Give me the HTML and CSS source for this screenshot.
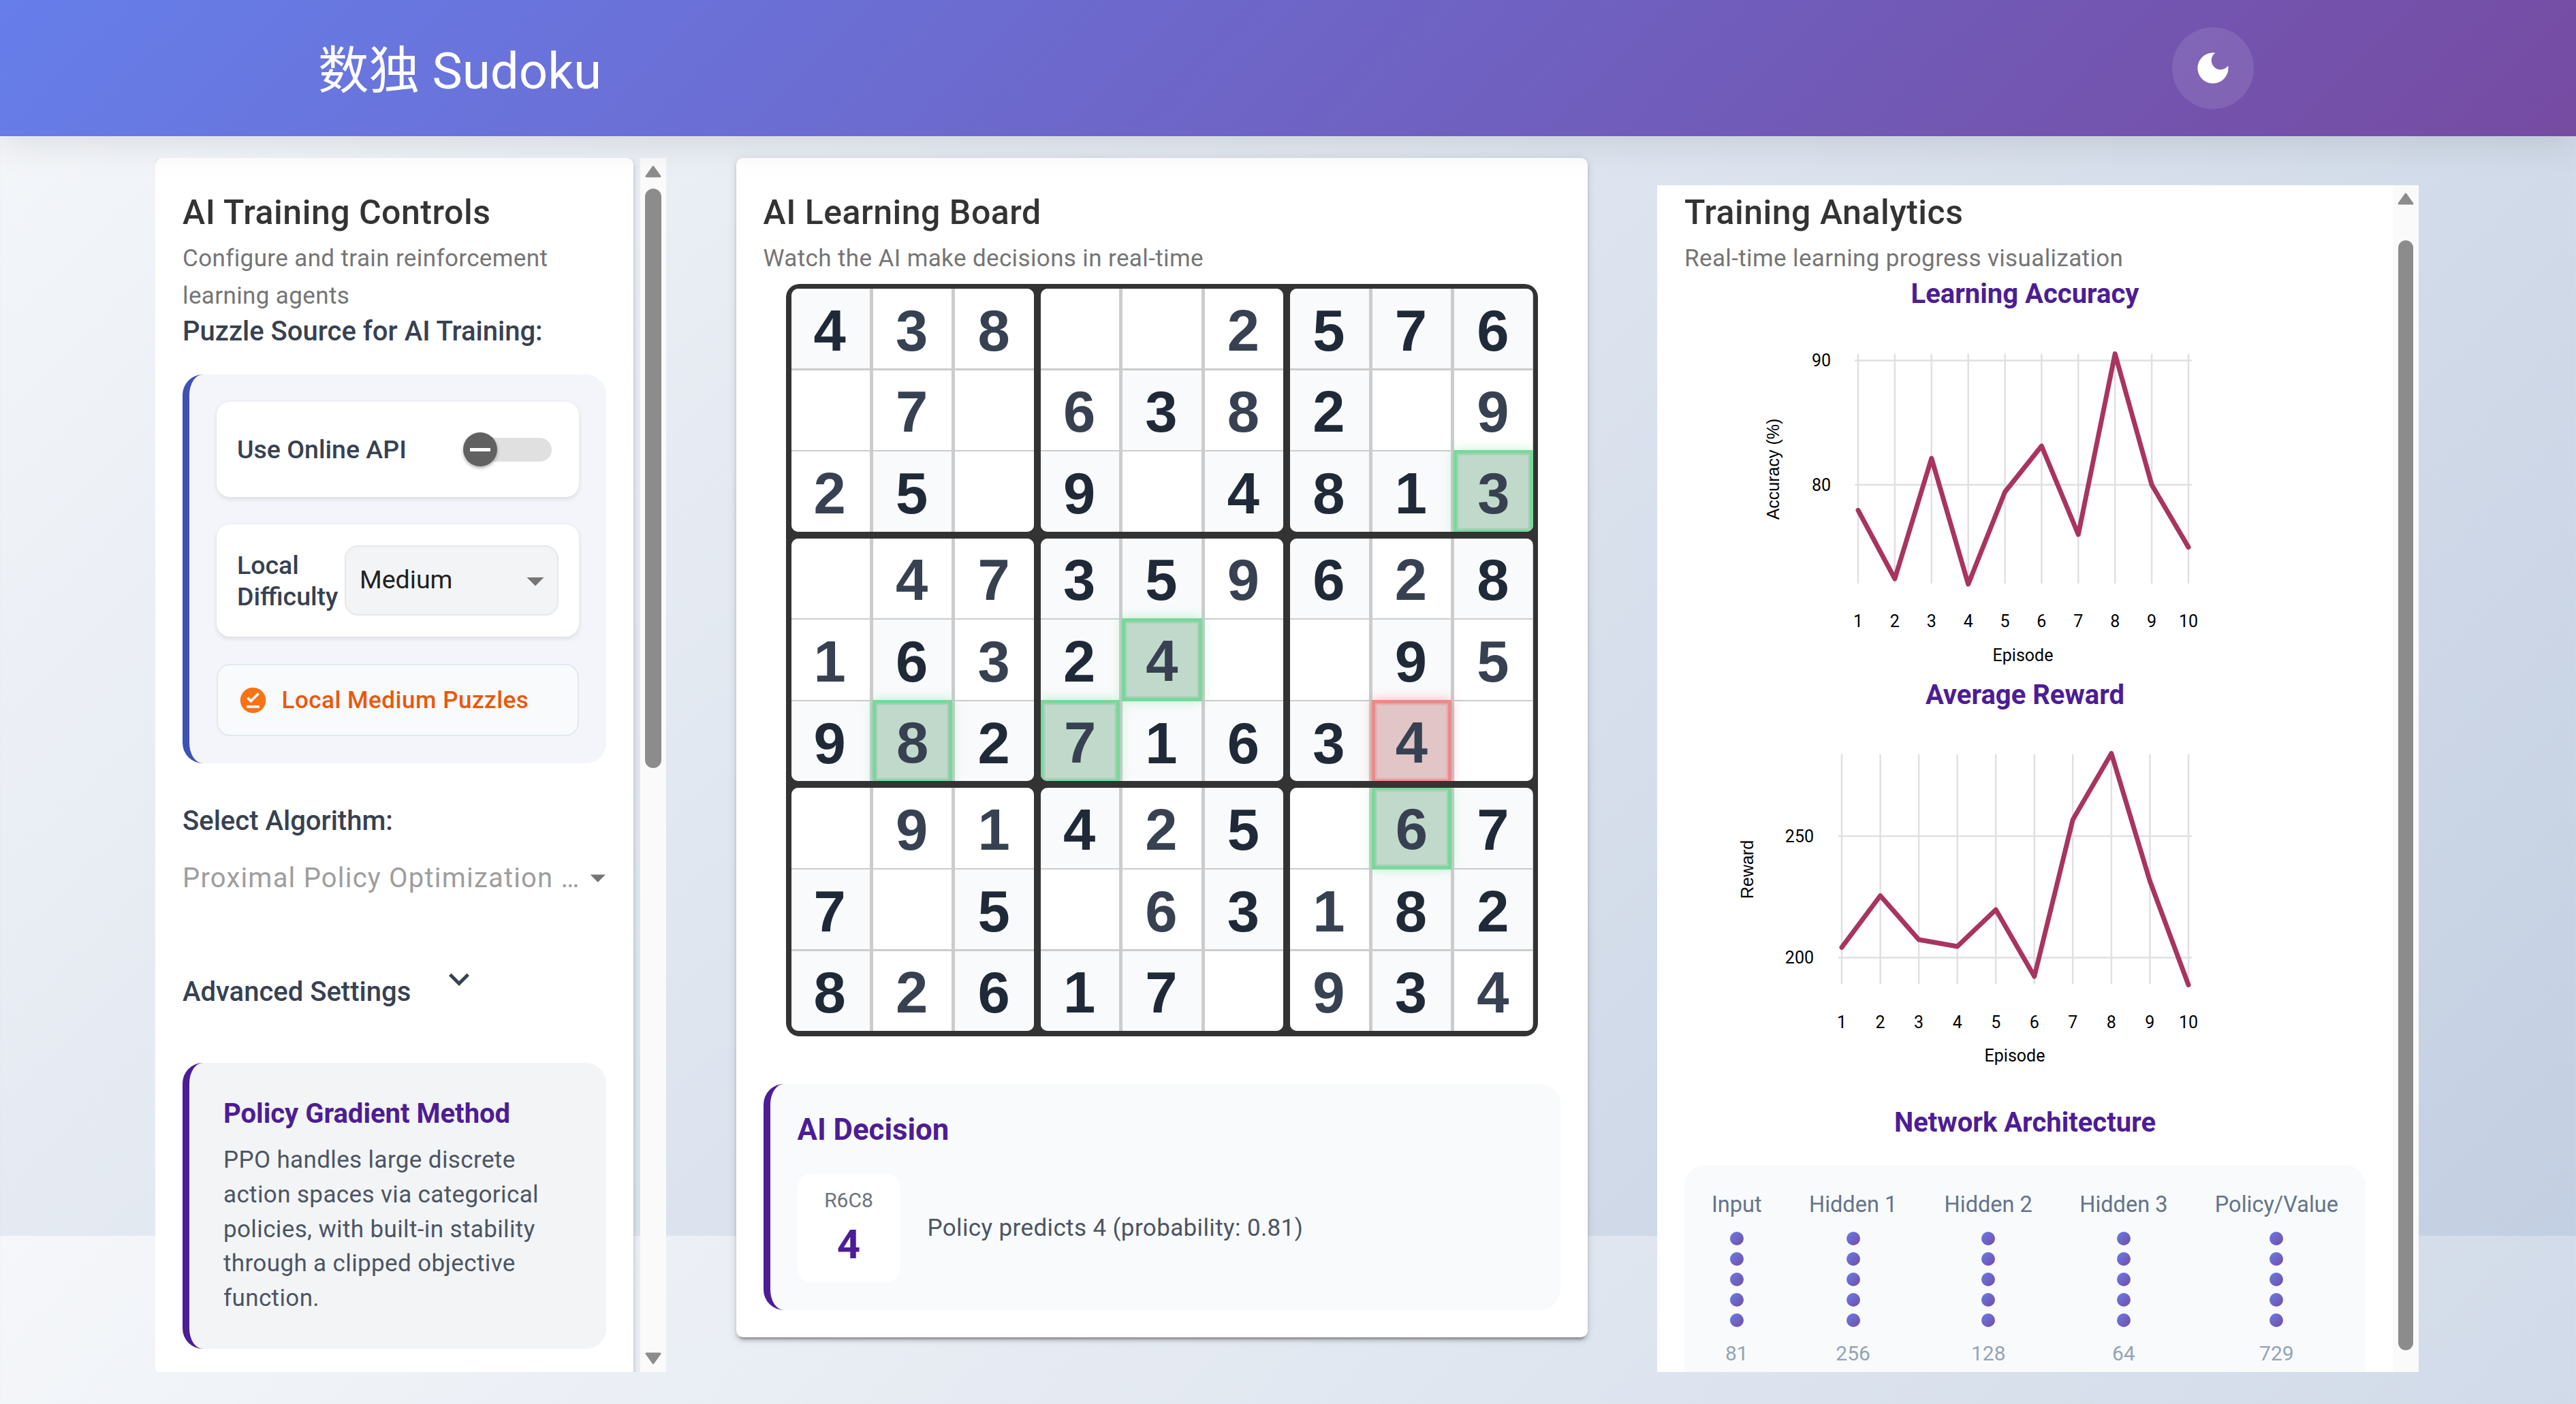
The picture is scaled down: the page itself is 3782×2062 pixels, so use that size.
FILE: index.html
```html
<!DOCTYPE html>
<html>
<head>
	<title>数独 Sudoku</title>
	<link rel="stylesheet" href="styles.css">
</head>
<body>
	<header class="topbar">
		<div class="brand">数独 Sudoku</div>
		<button class="theme-btn">
			<svg viewBox="0 0 24 24" width="60" height="60"><path fill="#fff" d="M12 3c-4.97 0-9 4.03-9 9s4.03 9 9 9 9-4.03 9-9c0-.46-.04-.92-.1-1.36-.98 1.37-2.58 2.26-4.4 2.26-2.98 0-5.4-2.42-5.4-5.4 0-1.81.89-3.42 2.26-4.4-.44-.06-.9-.1-1.36-.1z"/></svg>
		</button>
	</header>

	<main class="layout">
		<!-- left column -->
		<section class="col-left">
			<div class="paper paper-left">
				<h2 class="panel-title">AI Training Controls</h2>
				<p class="panel-sub">Configure and train reinforcement learning agents</p>
				<div class="field-label">Puzzle Source for AI Training:</div>

				<div class="source-card">
					<div class="source-row switch-row">
						<span class="row-label">Use Online API</span>
						<span class="switch"><span class="switch-thumb"><span class="switch-minus"></span></span></span>
					</div>
					<div class="source-row diff-row">
						<span class="row-label diff-label">Local Difficulty</span>
						<div class="diff-select">
							<span>Medium</span>
							<svg viewBox="0 0 24 24" width="60" height="60"><path fill="#757575" d="M7 10l5 5 5-5z"/></svg>
						</div>
					</div>
					<div class="status-row">
						<svg viewBox="0 0 24 24" width="45" height="45"><path fill="#f97316" d="M12 2C6.5 2 2 6.5 2 12s4.5 10 10 10 10-4.5 10-10S17.5 2 12 2zm5 16H7v-2h10v2zm-6.7-4L7 10.7l1.4-1.4 1.9 1.9 5.3-5.3L17 7.3 10.3 14z"/></svg>
						<span>Local Medium Puzzles</span>
					</div>
				</div>

				<div class="field-label algo-label">Select Algorithm:</div>
				<div class="algo-select">
					<span>Proximal Policy Optimization …</span>
					<svg viewBox="0 0 24 24" width="60" height="60"><path fill="#757575" d="M7 10l5 5 5-5z"/></svg>
				</div>

				<div class="advanced">
					<span>Advanced Settings</span>
					<svg viewBox="0 0 24 24" width="60" height="60"><path fill="#374151" d="M16.59 8.59 12 13.17 7.41 8.59 6 10l6 6 6-6z"/></svg>
				</div>

				<div class="info-card">
					<h4>Policy Gradient Method</h4>
					<p>PPO handles large discrete action spaces via categorical policies, with built-in stability through a clipped objective function.</p>
				</div>
			</div>
			<div class="scroll-track">
				<svg class="arrow" viewBox="0 0 24 18" width="24" height="18"><path fill="#8c8c8c" stroke="#8c8c8c" stroke-width="3" stroke-linejoin="round" d="M12 2 22 16H2z"/></svg>
				<div class="scroll-thumb thumb-left"></div>
				<svg class="arrow arrow-down" viewBox="0 0 24 18" width="24" height="18"><path fill="#8c8c8c" stroke="#8c8c8c" stroke-width="3" stroke-linejoin="round" d="M12 16 22 2H2z"/></svg>
			</div>
		</section>

		<!-- board -->
		<section class="paper paper-mid">
			<h2 class="panel-title">AI Learning Board</h2>
			<p class="panel-sub">Watch the AI make decisions in real-time</p>

			<div class="board">
				<div class="block">
					<div class="cell given">4</div><div class="cell">3</div><div class="cell">8</div>
					<div class="cell"></div><div class="cell">7</div><div class="cell"></div>
					<div class="cell">2</div><div class="cell given">5</div><div class="cell"></div>
				</div>
				<div class="block">
					<div class="cell"></div><div class="cell"></div><div class="cell">2</div>
					<div class="cell">6</div><div class="cell given">3</div><div class="cell">8</div>
					<div class="cell given">9</div><div class="cell"></div><div class="cell given">4</div>
				</div>
				<div class="block">
					<div class="cell given">5</div><div class="cell given">7</div><div class="cell given">6</div>
					<div class="cell given">2</div><div class="cell"></div><div class="cell">9</div>
					<div class="cell given">8</div><div class="cell given">1</div><div class="cell good">3</div>
				</div>
				<div class="block">
					<div class="cell"></div><div class="cell">4</div><div class="cell">7</div>
					<div class="cell">1</div><div class="cell given">6</div><div class="cell">3</div>
					<div class="cell given">9</div><div class="cell good">8</div><div class="cell given">2</div>
				</div>
				<div class="block">
					<div class="cell given">3</div><div class="cell given">5</div><div class="cell">9</div>
					<div class="cell given">2</div><div class="cell good">4</div><div class="cell"></div>
					<div class="cell good">7</div><div class="cell given">1</div><div class="cell given">6</div>
				</div>
				<div class="block">
					<div class="cell given">6</div><div class="cell">2</div><div class="cell given">8</div>
					<div class="cell"></div><div class="cell given">9</div><div class="cell">5</div>
					<div class="cell given">3</div><div class="cell bad">4</div><div class="cell"></div>
				</div>
				<div class="block">
					<div class="cell"></div><div class="cell">9</div><div class="cell">1</div>
					<div class="cell given">7</div><div class="cell"></div><div class="cell given">5</div>
					<div class="cell given">8</div><div class="cell">2</div><div class="cell given">6</div>
				</div>
				<div class="block">
					<div class="cell given">4</div><div class="cell">2</div><div class="cell given">5</div>
					<div class="cell"></div><div class="cell">6</div><div class="cell given">3</div>
					<div class="cell given">1</div><div class="cell given">7</div><div class="cell"></div>
				</div>
				<div class="block">
					<div class="cell"></div><div class="cell good">6</div><div class="cell given">7</div>
					<div class="cell">1</div><div class="cell given">8</div><div class="cell given">2</div>
					<div class="cell">9</div><div class="cell given">3</div><div class="cell">4</div>
				</div>
			</div>

			<div class="decision">
				<h4>AI Decision</h4>
				<div class="decision-body">
					<div class="decision-cell">
						<div class="decision-pos">R6C8</div>
						<div class="decision-num">4</div>
					</div>
					<p>Policy predicts 4 (probability: 0.81)</p>
				</div>
			</div>
		</section>

		<!-- analytics -->
		<section class="col-right">
			<div class="analytics">
				<h2 class="panel-title">Training Analytics</h2>
				<p class="panel-sub">Real-time learning progress visualization</p>

				<h4 class="chart-title first-title">Learning Accuracy</h4>
				<svg class="chart chart-acc" viewBox="0 0 1000 543" width="1000" height="543">
					<g class="grid">
						<path d="M255 66.6V404M308.9 66.6V404M362.8 66.6V404M416.7 66.6V404M470.6 66.6V404M524.4 66.6V404M578.3 66.6V404M632.2 66.6V404M686.1 66.6V404M740 66.6V404"/>
						<path d="M250 76.5H745M250 259H745"/>
					</g>
					<polyline class="series" points="255,296.4 308.9,397 362.8,220 416.7,405 470.6,269.5 524.4,202 578.3,332 632.2,66.6 686.1,259 740,350.6"/>
					<g class="ticks">
						<text x="215" y="85" text-anchor="end">90</text>
						<text x="215" y="268" text-anchor="end">80</text>
						<text x="255" y="468">1</text><text x="308.9" y="468">2</text><text x="362.8" y="468">3</text><text x="416.7" y="468">4</text><text x="470.6" y="468">5</text><text x="524.4" y="468">6</text><text x="578.3" y="468">7</text><text x="632.2" y="468">8</text><text x="686.1" y="468">9</text><text x="740" y="468">10</text>
						<text x="497" y="518">Episode</text>
					</g>
					<text class="axis-y" transform="translate(139 236) rotate(-90)">Accuracy (%)</text>
				</svg>

				<h4 class="chart-title">Average Reward</h4>
				<svg class="chart chart-rew" viewBox="0 0 1000 582" width="1000" height="582">
					<g class="grid">
						<path d="M231 65.8V403M287.6 65.8V403M344.1 65.8V403M400.7 65.8V403M457.2 65.8V403M513.8 65.8V403M570.3 65.8V403M626.9 65.8V403M683.4 65.8V403M740 65.8V403"/>
						<path d="M226 186H745M226 364.5H745"/>
					</g>
					<polyline class="series" points="231,349.4 287.6,273.5 344.1,338 400.7,348 457.2,294 513.8,392 570.3,161.7 626.9,64.5 683.4,252 740,404.5"/>
					<g class="ticks">
						<text x="190" y="194.5" text-anchor="end">250</text>
						<text x="190" y="373" text-anchor="end">200</text>
						<text x="231" y="468">1</text><text x="287.6" y="468">2</text><text x="344.1" y="468">3</text><text x="400.7" y="468">4</text><text x="457.2" y="468">5</text><text x="513.8" y="468">6</text><text x="570.3" y="468">7</text><text x="626.9" y="468">8</text><text x="683.4" y="468">9</text><text x="740" y="468">10</text>
						<text x="485" y="517">Episode</text>
					</g>
					<text class="axis-y" transform="translate(101 235) rotate(-90)">Reward</text>
				</svg>

				<h4 class="chart-title net-title">Network Architecture</h4>
				<div class="net">
					<div class="net-col">
						<span class="net-name">Input</span>
						<span class="dot"></span><span class="dot"></span><span class="dot"></span><span class="dot"></span><span class="dot"></span>
						<span class="net-size">81</span>
					</div>
					<div class="net-col">
						<span class="net-name">Hidden 1</span>
						<span class="dot"></span><span class="dot"></span><span class="dot"></span><span class="dot"></span><span class="dot"></span>
						<span class="net-size">256</span>
					</div>
					<div class="net-col">
						<span class="net-name">Hidden 2</span>
						<span class="dot"></span><span class="dot"></span><span class="dot"></span><span class="dot"></span><span class="dot"></span>
						<span class="net-size">128</span>
					</div>
					<div class="net-col">
						<span class="net-name">Hidden 3</span>
						<span class="dot"></span><span class="dot"></span><span class="dot"></span><span class="dot"></span><span class="dot"></span>
						<span class="net-size">64</span>
					</div>
					<div class="net-col">
						<span class="net-name">Policy/Value</span>
						<span class="dot"></span><span class="dot"></span><span class="dot"></span><span class="dot"></span><span class="dot"></span>
						<span class="net-size">729</span>
					</div>
				</div>
			</div>
			<div class="scroll-track track-right">
				<svg class="arrow" viewBox="0 0 24 18" width="24" height="18"><path fill="#8c8c8c" stroke="#8c8c8c" stroke-width="3" stroke-linejoin="round" d="M12 2 22 16H2z"/></svg>
				<div class="scroll-thumb thumb-right"></div>
			</div>
		</section>
	</main>
</body>
</html>
```
FILE: styles.css
```css
html {
	height: 100%;
	overflow: hidden;
	background: linear-gradient(135deg, #f5f7fa 0%, #c3cfe2 100%) 0 0 / 100% 1815px;
}
body {
	margin: 0;
	height: 100%;
	font-family: Roboto, "Noto Sans CJK SC", sans-serif;
	color: #333;
}
h2, h4, p {
	margin: 0;
}

/* header */
.topbar {
	height: 200px;
	display: flex;
	align-items: center;
	justify-content: space-between;
	padding: 0 473px 0 467px;
	background: linear-gradient(135deg, #667eea 0%, #764ba2 100%);
	box-shadow: 0 10px 50px rgba(0, 0, 0, .1);
	position: relative;
}
.brand {
	color: #fff;
	font-size: 74.5px;
	line-height: 88px;
	margin-top: 10px;
}
.theme-btn {
	width: 120px;
	height: 120px;
	padding: 0;
	border: none;
	border-radius: 50%;
	background: rgba(255, 255, 255, .1);
	display: flex;
	align-items: center;
	justify-content: center;
}

/* columns */
.layout {
	display: flex;
	justify-content: center;
	gap: 102.5px;
	padding: 32px 3px 0 0;
}
.col-left {
	width: 750px;
	height: 1783px;
	flex: none;
	display: flex;
	overflow: hidden;
}
.col-right {
	width: 1118px;
	height: 1743px;
	margin-top: 40px;
	flex: none;
	display: flex;
	overflow: hidden;
	background: #fff;
}
.paper {
	background: #fff;
	border-radius: 10px;
	box-shadow: 0 7.5px 2.5px -5px rgba(0, 0, 0, .2), 0 5px 5px 0 rgba(0, 0, 0, .14), 0 2.5px 12.5px 0 rgba(0, 0, 0, .12);
}
.paper-left {
	width: 702px;
	margin-right: 10px;
	flex: none;
	padding: 40px;
	box-sizing: border-box;
	align-self: flex-start;
}
.paper-mid {
	width: 1250px;
	flex: none;
	padding: 40px;
	box-sizing: border-box;
	align-self: flex-start;
}
.analytics {
	width: 1080px;
	padding: 0 40px;
	box-sizing: border-box;
	flex: none;
}

/* fake scrollbar, it's only a picture of one */
.scroll-track {
	width: 38px;
	flex: none;
	background: #fafafa;
	display: flex;
	flex-direction: column;
	align-items: center;
	padding-top: 11px;
	box-sizing: border-box;
}
.arrow {
	flex: none;
	display: block;
}
.scroll-thumb {
	width: 24px;
	border-radius: 12px;
	background: #8c8c8c;
	flex: none;
}
.thumb-left {
	height: 851px;
	margin-top: 16px;
}
.thumb-right {
	width: 22px;
	height: 1630px;
	margin-top: 52px;
	border-radius: 11px;
}
.arrow-down {
	margin-top: 858px;
}

/* shared panel text */
.panel-title {
	font-size: 50px;
	line-height: 80px;
	font-weight: 500;
	letter-spacing: .5px;
	color: #333;
}
.panel-sub {
	font-size: 35px;
	line-height: 55px;
	letter-spacing: .375px;
	color: #757575;
}
.field-label {
	margin-top: 2px;
	font-size: 40px;
	line-height: 46px;
	font-weight: 500;
	color: #374151;
}

/* source card */
.source-card {
	margin-top: 40px;
	padding: 40px;
	height: 571px;
	box-sizing: border-box;
	background: #f3f5fa;
	border-left: 10px solid #3f51b5;
	border-radius: 30px;
	display: flex;
	flex-direction: column;
	gap: 40px;
}
.source-row {
	background: #fff;
	border-radius: 20px;
	box-shadow: 0 2.5px 7.5px rgba(0, 0, 0, .1);
	display: flex;
	align-items: center;
	padding-left: 30px;
}
.row-label {
	font-size: 37.5px;
	line-height: 46px;
	font-weight: 500;
	color: #374151;
}
.switch-row {
	height: 140px;
	justify-content: space-between;
	padding-right: 40px;
}
.switch {
	width: 108px;
	height: 35px;
	border-radius: 18px;
	background: #e0e0e0;
	position: relative;
}
.switch-thumb {
	position: absolute;
	left: -22px;
	top: -7.5px;
	width: 50px;
	height: 50px;
	border-radius: 50%;
	background: #616161;
	box-shadow: 0 2.5px 5px rgba(0, 0, 0, .3);
	display: flex;
	align-items: center;
	justify-content: center;
}
.switch-minus {
	width: 30px;
	height: 5px;
	background: #fff;
}
.diff-row {
	height: 165px;
	padding-right: 30px;
	flex: none;
}
.diff-label {
	width: 150px;
	margin-right: 8px;
	flex: none;
}
.diff-select {
	flex: 1;
	height: 103px;
	box-sizing: border-box;
	background: #f3f4f6;
	border: 2.5px solid #e5e7eb;
	border-radius: 20px;
	display: flex;
	align-items: center;
	justify-content: space-between;
	padding-left: 20px;
	padding-right: 2.5px;
	font-size: 37.5px;
	color: #212121;
}
.diff-select span {
	padding-bottom: 3px;
}
.status-row {
	height: 106px;
	box-sizing: border-box;
	background: #f8fafc;
	border: 2.5px solid #e2e8f0;
	border-radius: 20px;
	display: flex;
	align-items: center;
	gap: 20px;
	padding-left: 28.5px;
	font-size: 35px;
	letter-spacing: .5px;
	font-weight: 500;
	color: #ea580c;
}

/* algorithm + advanced */
.algo-label {
	margin-top: 62px;
}
.algo-select {
	margin-top: 30px;
	height: 60px;
	margin-right: -15px;
	display: flex;
	align-items: center;
	justify-content: space-between;
	font-size: 40px;
	letter-spacing: 1.2px;
	white-space: nowrap;
	color: #9e9e9e;
}
.advanced {
	margin-top: 107px;
	height: 60px;
	display: flex;
	align-items: center;
	font-size: 40px;
	font-weight: 500;
	color: #374151;
}
.advanced svg {
	margin-left: 41px;
	margin-top: -36px;
}

/* info card */
.info-card {
	margin-top: 75px;
	padding: 52px 50px 48px;
	background: #f3f4f6;
	border-left: 10px solid #4c1d95;
	border-radius: 30px;
}
.info-card h4 {
	font-size: 40px;
	line-height: 46px;
	font-weight: 700;
	color: #4c1d95;
}
.info-card p {
	margin-top: 20px;
	font-size: 35px;
	line-height: 50.75px;
	letter-spacing: .375px;
	color: #4b5563;
}

/* board */
.board {
	margin-top: 9.5px;
	margin-left: 33.5px;
	width: 1104px;
	height: 1105px;
	box-sizing: border-box;
	padding: 7.5px;
	background: #333;
	border-radius: 20px;
	display: grid;
	grid-template-columns: repeat(3, 1fr);
	grid-template-rows: repeat(3, 1fr);
	gap: 10px;
}
.block {
	background: #ccc;
	border-radius: 10px;
	overflow: hidden;
	display: grid;
	grid-template-columns: repeat(3, 1fr);
	grid-template-rows: repeat(3, 1fr);
	gap: 2.5px 5px;
}
.cell {
	background: #fff;
	color: #374151;
	font-family: "Liberation Sans", Arial, sans-serif;
	font-size: 85px;
	font-weight: 700;
	display: flex;
	align-items: center;
	justify-content: center;
	padding: 6px 2px 0 0;
	min-height: 0;
}
.given {
	background: #f9fafb;
	color: #1f2937;
}
.good, .bad {
	position: relative;
	z-index: 1;
	margin: -2.5px -1px;
	border: 5px solid #78d89b;
	padding: 5px 0 0;
	background: #c1d9cb;
	box-shadow: inset 0 0 0 2.5px #a9d0b9, 0 0 15px rgba(74, 222, 128, .35);
}
.bad {
	border-color: #ea8a8a;
	background: #e2c5c7;
	box-shadow: inset 0 0 0 2.5px #e0b0b0, 0 0 15px rgba(239, 68, 68, .35);
}

/* decision */
.decision {
	margin-top: 70px;
	padding: 40px;
	height: 332px;
	box-sizing: border-box;
	background: #f9fafb;
	border-left: 10px solid #4c1d95;
	border-radius: 30px;
}
.decision h4 {
	padding-top: 2px;
	font-size: 43.75px;
	line-height: 50px;
	font-weight: 700;
	color: #4c1d95;
}
.decision-body {
	margin-top: 40px;
	display: flex;
	align-items: center;
	gap: 40px;
}
.decision-cell {
	width: 151px;
	height: 159px;
	padding-top: 21px;
	box-sizing: border-box;
	background: #fff;
	border-radius: 20px;
	text-align: center;
}
.decision-pos {
	font-size: 30px;
	line-height: 35px;
	color: #6b7280;
}
.decision-num {
	margin-top: 13px;
	font-size: 60px;
	line-height: 70px;
	font-weight: 700;
	color: #4c1d95;
}
.decision-body p {
	font-size: 35px;
	letter-spacing: .375px;
	color: #4b5563;
}

/* charts */
.chart-title {
	font-size: 40px;
	line-height: 46px;
	font-weight: 700;
	color: #4c1d95;
	text-align: center;
}
.first-title {
	padding-top: 2px;
}
.chart {
	display: block;
	margin-top: -2px;
	margin-bottom: 2px;
}
.grid path {
	fill: none;
	stroke: #e0e0e0;
	stroke-width: 2.5;
}
.series {
	fill: none;
	stroke: #a8345f;
	stroke-width: 7;
	stroke-linejoin: round;
	stroke-linecap: round;
}
.ticks text {
	font-family: Roboto, sans-serif;
	font-size: 25px;
	fill: #000;
	text-anchor: middle;
}
.ticks text[text-anchor="end"] {
	text-anchor: end;
}
.axis-y {
	font-family: "Liberation Sans", Arial, sans-serif;
	font-size: 25px;
	fill: #000;
	text-anchor: middle;
}

/* network */
.net-title {
	margin-bottom: 39px;
}
.net {
	height: 340px;
	box-sizing: border-box;
	padding: 38px 40px;
	background: #f9fafb;
	border-radius: 30px;
	display: flex;
	justify-content: space-between;
}
.net-col {
	display: flex;
	flex-direction: column;
	align-items: center;
	gap: 10px;
}
.net-name {
	font-size: 32.5px;
	line-height: 41px;
	color: #64748b;
	margin-bottom: 9px;
}
.dot {
	width: 20px;
	height: 20px;
	border-radius: 50%;
	background: linear-gradient(135deg, #667eea, #764ba2);
}
.net-size {
	margin-top: 11px;
	font-size: 30px;
	line-height: 35px;
	color: #94a3b8;
}
```
